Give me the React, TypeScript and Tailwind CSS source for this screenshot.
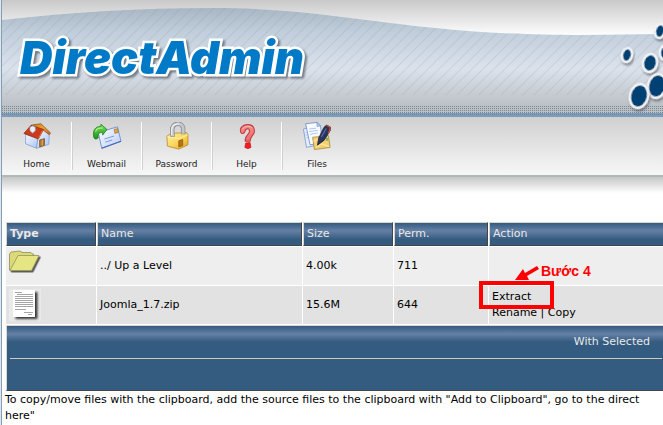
import React from 'react';

const HomeIcon = () => (
  <svg className="h-8 w-8" viewBox="0 0 32 32">
    <defs>
      <linearGradient id="wall" x1="0" y1="0" x2="1" y2="1">
        <stop offset="0" stopColor="#f4f8ff" />
        <stop offset="1" stopColor="#a9c4f6" />
      </linearGradient>
      <linearGradient id="roof" x1="0" y1="0" x2="1" y2="1">
        <stop offset="0" stopColor="#c8741c" />
        <stop offset="0.5" stopColor="#f0a436" />
        <stop offset="1" stopColor="#c4621a" />
      </linearGradient>
    </defs>
    <path d="M3 14 L17 18 L15.5 30 L3 25Z" fill="url(#wall)" stroke="#7b97cc" strokeWidth="0.8" />
    <path d="M17 19 L23 9 L30 14.5 L29.5 25.5 L15.5 30Z" fill="url(#wall)" stroke="#7b97cc" strokeWidth="0.8" />
    <path d="M19 20.5 L24.5 19 V26.5 L19 28.5Z" fill="#b9772c" stroke="#6e4214" strokeWidth="0.8" />
    <path d="M22 20.5 V27" stroke="#e8b868" strokeWidth="1" />
    <path d="M9.5 3.5 L20.5 2 L31.5 12.5 L30 14.5 L23 9 L9 5Z" fill="url(#roof)" stroke="#8c4a14" strokeWidth="0.8" />
    <path d="M9 4 L1 13 L17.5 19.5 L23.5 8.5 L13 5Z" fill="#cb3b18" stroke="#8a2a0c" strokeWidth="0.8" />
    <path d="M22.5 9.5 L17.5 19" stroke="#ee7a44" strokeWidth="1" />
    <path d="M8 6 L11 4.5 L14 6 V10 L11 12.5 L8 10Z" fill="#e8f0fd" stroke="#9aadd2" strokeWidth="0.8" />
  </svg>
);

const WebmailIcon = () => (
  <svg className="h-8 w-8" viewBox="0 0 32 32">
    <defs>
      <linearGradient id="envelope" x1="0" y1="0" x2="1" y2="1">
        <stop offset="0" stopColor="#ffffff" />
        <stop offset="1" stopColor="#b9cdf8" />
      </linearGradient>
      <linearGradient id="arrow" x1="0" y1="0" x2="0" y2="1">
        <stop offset="0" stopColor="#7de055" />
        <stop offset="1" stopColor="#169419" />
      </linearGradient>
    </defs>
    <path d="M6 12 L28 5.5 L32 22 L10 30Z" fill="url(#envelope)" stroke="#6b8ad0" strokeWidth="1" />
    <path d="M10 30 L32 22" stroke="#4767b4" strokeWidth="1.2" />
    <path d="M13 19.5 L24 16 M14 23 L22 20.5" stroke="#6f8fd6" strokeWidth="1" />
    <path d="M24 8.5 L28 7.5 L29 12 L25 13Z" fill="#e0a63c" stroke="#865f34" strokeWidth="0.6" />
    <path d="M1 18 C-1 9 3 5 9 5 V2.5 L16 8.5 L11 15 V12 C7 12 5.5 13 6 18 C4 20 2 20 1 18Z" fill="url(#arrow)" stroke="#14781a" strokeWidth="0.8" />
    <path d="M3 11 C4 7.5 7 6.5 11 7" stroke="#b8f79c" strokeWidth="1.2" fill="none" />
  </svg>
);

const PasswordIcon = () => (
  <svg className="h-8 w-8" viewBox="0 0 32 32">
    <defs>
      <linearGradient id="lock" x1="0" y1="0" x2="1" y2="1">
        <stop offset="0" stopColor="#fff3a6" />
        <stop offset="0.5" stopColor="#fbd860" />
        <stop offset="1" stopColor="#e3a724" />
      </linearGradient>
    </defs>
    <path d="M4.5 16 L10 13 L27 12 L28.5 14.5 V26 L18 31 L5 27.5Z" fill="url(#lock)" stroke="#b8852a" strokeWidth="0.9" />
    <path d="M5 16.5 L17 19 L28 15" fill="none" stroke="#fff2ab" strokeWidth="1" />
    <path d="M11 17 L10.5 9 C10.5 0.5 21.5 0 23 6.5 V14" fill="none" stroke="#85888d" strokeWidth="5" />
    <path d="M11 16.5 L10.5 9 C10.5 0.5 21.5 0 23 6.5 V13.5" fill="none" stroke="#c4c7cc" strokeWidth="3.4" />
    <path d="M10 15 V9 C10 3.5 15 1.5 18.5 2.5" fill="none" stroke="#f7f8f9" strokeWidth="1.2" />
    <path d="M18 21.5 L22.5 20 V27 L18 28.5Z" fill="#b8741a" stroke="#8a5410" strokeWidth="0.8" />
  </svg>
);

const HelpIcon = () => (
  <svg className="h-8 w-8" viewBox="0 0 32 32">
    <defs>
      <linearGradient id="mark" x1="0" y1="0" x2="0" y2="1">
        <stop offset="0" stopColor="#f58c8a" />
        <stop offset="1" stopColor="#f26a6a" />
      </linearGradient>
    </defs>
    <path d="M9 12 C7 7 11 3 17 3 C25 3 26 11 22.5 15 C20 18 19.5 19 19.5 22 H14 C13 17 17 15 18.5 12 C20 7 15 6 13.5 11 C13 13.5 10 14 9 12Z" fill="url(#mark)" stroke="#bd3b3e" strokeWidth="1.2" />
    <path d="M11 8 C13 4 20 4 22 7" fill="none" stroke="#fcc3c1" strokeWidth="1" />
    <path d="M14.5 24 L19.5 23.5 L20.5 29 L17 30.5 L13.5 29Z" fill="#f01c22" stroke="#c2151b" strokeWidth="0.8" />
  </svg>
);

const FilesIcon = () => (
  <svg className="h-8 w-8" viewBox="0 0 32 32">
    <path d="M0.5 8 L9 6 L13 27 L4 29Z" fill="#e6eefc" stroke="#7894cf" strokeWidth="0.9" />
    <path d="M3 2 L16 0.5 L20 4.5 L22 24 L8 26Z" fill="#f7faff" stroke="#6787c7" strokeWidth="0.9" />
    <path d="M16 0.5 V5 L20 4.5Z" fill="#bad0f6" stroke="#6787c7" strokeWidth="0.7" />
    <path d="M7 8 L15 7 M7 11 L17 9.5 M8 14 L17 12.5 M3 12 L5 11.5 M3 15 L6 14.5 M4 18 L6 17.5" stroke="#9db8e8" strokeWidth="0.9" />
    <path d="M11 17.5 L29 15.5 L31 29 L13 31.5Z" fill="#f6cf70" stroke="#a98636" strokeWidth="0.9" />
    <path d="M12 22 L17 20 M15 29 L21 25 L30 28" fill="none" stroke="#fff0b6" strokeWidth="1" />
    <path d="M26 18 H29 V21.5 H26Z" fill="#7db56a" />
    <path d="M16.5 26.5 L18 18 L24 6 L27 3.5 L31.5 6 L31 10 L24 21Z" fill="#29355c" stroke="#121a35" strokeWidth="0.8" />
    <path d="M27 4 L31 6 L30 11 L28.5 13" fill="none" stroke="#e2482a" strokeWidth="1.3" />
    <path d="M21 17 L26.5 7.5" stroke="#5e74ad" strokeWidth="1.2" />
  </svg>
);

const FolderIcon = () => (
  <svg className="h-8 w-8" viewBox="0 0 32 32">
    <defs>
      <filter id="folderShadow" x="-20%" y="-20%" width="140%" height="140%">
        <feDropShadow dx="1.5" dy="1.5" stdDeviation="0.7" floodColor="#333" floodOpacity="0.8" />
      </filter>
    </defs>
    <g filter="url(#folderShadow)" strokeLinejoin="round">
      <path d="M0.5 20 V4 L2 2 L11 1 L13 2.5 H22 L24.5 5 V8 L21 20Z" fill="#dbda76" stroke="#8f9157" strokeWidth="0.8" />
      <path d="M1 20.5 L9 5.5 H30 L22.5 20.5Z" fill="#e6e584" stroke="#92945a" strokeWidth="0.8" />
    </g>
  </svg>
);

const FileIcon = () => (
  <svg className="h-8 w-8" viewBox="0 0 32 32">
    <defs>
      <filter id="fileShadow" x="-20%" y="-20%" width="140%" height="140%">
        <feDropShadow dx="2.5" dy="2" stdDeviation="0.8" floodColor="#222" floodOpacity="0.9" />
      </filter>
    </defs>
    <rect width="32" height="32" fill="#eaeaea" />
    <path d="M4 1 H26 V28 H4Z" fill="#fff" filter="url(#fileShadow)" />
    <path d="M6 3.5 H13 M8 5.5 H24 M6 7.5 H24 M6 9.5 H24 M6 11.5 H24 M6 13.5 H24 M6 15.5 H24 M6 17.5 H24 M6 20.5 H17 M15 23.5 H24 M19 25.5 H23" stroke="#a6a6a6" strokeWidth="1" />
  </svg>
);

const NAV_ITEMS = [
  { label: 'Home', icon: HomeIcon },
  { label: 'Webmail', icon: WebmailIcon },
  { label: 'Password', icon: PasswordIcon },
  { label: 'Help', icon: HelpIcon },
  { label: 'Files', icon: FilesIcon },
];

// Decorative bubbles on the right side of the banner
const BUBBLES = [
  { x: 52, y: 31, rx: 4, ry: 6 },
  { x: 19, y: 55, rx: 4, ry: 6 },
  { x: 58, y: 52, rx: 5, ry: 7 },
  { x: 42, y: 63, rx: 6, ry: 8 },
  { x: 49, y: 86, rx: 8, ry: 11 },
  { x: 31, y: 96, rx: 8, ry: 11 },
];

const FILES = [
  { name: '../ Up a Level', size: '4.00k', perm: '711', folder: true },
  { name: 'Joomla_1.7.zip', size: '15.6M', perm: '644', folder: false },
];

const COLUMNS = ['Type', 'Name', 'Size', 'Perm.', 'Action'];

const Banner = () => (
  <header className="relative h-[117px] overflow-hidden">
    <svg className="absolute inset-0 h-full w-full" viewBox="0 0 661 117" preserveAspectRatio="none">
      <defs>
        <linearGradient id="sky" x1="0" y1="0" x2="0" y2="36" gradientUnits="userSpaceOnUse">
          <stop offset="0" stopColor="#c9c9c9" />
          <stop offset="1" stopColor="#ffffff" />
        </linearGradient>
        <linearGradient id="wave" x1="0" y1="8" x2="0" y2="106" gradientUnits="userSpaceOnUse">
          <stop offset="0" stopColor="#a9b6c4" />
          <stop offset="0.25" stopColor="#c1cedb" />
          <stop offset="0.62" stopColor="#dbe2ec" />
          <stop offset="0.88" stopColor="#c6cbd1" />
          <stop offset="1" stopColor="#bcc1c6" />
        </linearGradient>
        <pattern id="stripes" width="11" height="11" patternUnits="userSpaceOnUse">
          <path d="M-1 12 L12 -1 M-1 1 L1 -1 M10 12 L12 10" stroke="#8294a4" strokeOpacity="0.18" strokeWidth="1.2" />
        </pattern>
        <pattern id="dots" width="2" height="2" patternUnits="userSpaceOnUse">
          <rect width="1" height="1" fill="#7d8790" />
        </pattern>
        <clipPath id="stripeArea">
          <rect width="661" height="95" />
        </clipPath>
      </defs>
      <rect width="661" height="117" fill="url(#sky)" />
      <path d="M0 20 C70 12 140 8 210 8 C340 8 400 35 580 35 L661 34 V117 H0Z" fill="url(#wave)" />
      <path d="M0 20 C70 12 140 8 210 8 C340 8 400 35 580 35 L661 34 V117 H0Z" fill="url(#stripes)" clipPath="url(#stripeArea)" />
      <rect y="113" width="661" height="4" fill="#7b9cbc" />
      <rect y="106" width="661" height="9" fill="url(#dots)" />
    </svg>
    <svg className="absolute right-0 top-0 h-[117px] w-[55px]" viewBox="0 0 55 117">
      <defs>
        <filter id="bubbleShadow" x="-20%" y="-20%" width="150%" height="150%">
          <feDropShadow dx="1.5" dy="2" stdDeviation="1" floodColor="#445" floodOpacity="0.6" />
        </filter>
      </defs>
      {BUBBLES.map(b => (
        <ellipse
          key={`${b.x}-${b.y}`}
          cx={b.x}
          cy={b.y}
          rx={b.rx + 1}
          ry={b.ry + 1}
          transform={`rotate(14 ${b.x} ${b.y})`}
          fill="#004173"
          stroke="#f1f3f4"
          strokeWidth="2.5"
          filter="url(#bubbleShadow)"
        />
      ))}
    </svg>
    <h1 className="relative px-[18px] pt-[30px] font-[Inter,sans-serif] text-[45px] leading-[56px] font-black whitespace-nowrap text-[#007ac6] italic drop-shadow-[2px_2px_1px_rgba(70,80,90,0.7)] [-webkit-text-stroke:5px_white] [paint-order:stroke_fill]">
      DirectAdmin
    </h1>
  </header>
);

const Toolbar = () => (
  <nav className="flex h-[60px] items-center border-b-2 border-[#b2b7b7] bg-linear-to-b from-[#d0d0d0] to-[#f7f7f7]">
    {NAV_ITEMS.map(({ label, icon: Icon }) => (
      <a
        key={label}
        href="#"
        className="flex h-12 w-[70px] flex-col items-center border-r border-white text-[9px] leading-3 text-[#222] shadow-[1px_0_0_#d0d0d0] last:border-0 last:shadow-none"
      >
        <Icon />
        <span className="pt-2">{label}</span>
      </a>
    ))}
  </nav>
);

// Red call-out around the Extract link
const ExtractCallout = () => (
  <div className="pointer-events-none absolute -top-7 -left-[13px] w-36">
    <div className="flex h-5 items-end pl-9">
      <svg className="h-4 w-6" viewBox="0 0 24 16">
        <path d="M0 15 L8 4 L10 8 L22 1 L24 4 L12 11 L14 15Z" fill="#f00" />
      </svg>
      <span className="pl-0.5 font-['Liberation_Sans',sans-serif] text-[14px] leading-5 font-bold whitespace-nowrap text-[#f00]">Bước 4</span>
    </div>
    <div className="h-7 w-[75px] border-4 border-[#f00]" />
  </div>
);

const FileTable = () => (
  <table className="w-full table-fixed border-separate border-spacing-px">
    <colgroup>
      <col className="w-[90px]" />
      <col className="w-[205px]" />
      <col className="w-[90px]" />
      <col className="w-[94px]" />
      <col />
    </colgroup>
    <thead>
      <tr>
        {COLUMNS.map(col => (
          <th
            key={col}
            className="h-6 border border-t-[#d6d6d0] border-r-[#444] border-b-[#444] border-l-[#d6d6d0] bg-linear-to-b from-[#345b80] from-0% via-[#6580a5] via-35% to-[#345b80] to-75% px-[3px] text-left font-normal text-[#e8e8e8] first:font-bold"
          >
            {col}
          </th>
        ))}
      </tr>
    </thead>
    <tbody>
      {FILES.map(file => (
        <tr key={file.name} className="bg-[#eee] even:bg-[#e2e2e2]">
          <td className="h-[38px] px-[3px] align-middle">{file.folder ? <FolderIcon /> : <FileIcon />}</td>
          <td className="px-[3px]">{file.name}</td>
          <td className="px-[3px]">{file.size}</td>
          <td className="px-[3px]">{file.perm}</td>
          <td className="px-[3px]">
            {!file.folder && (
              <div className="relative">
                <a href="#" className="block w-fit">Extract</a>
                <a href="#">Rename</a> | <a href="#">Copy</a>
                <ExtractCallout />
              </div>
            )}
          </td>
        </tr>
      ))}
    </tbody>
    <tfoot>
      <tr>
        <td
          colSpan={5}
          className="h-[66px] border border-t-[#d6d6d0] border-r-[#444] border-b-[#444] border-l-[#d6d6d0] bg-[#345b80] bg-[linear-gradient(#345b80,#6580a5_8px,#345b80_16px)] px-[3px] text-right align-top text-[#e8e8e8]"
        >
          <div className="border-b border-[#d4c8b8] pt-2 pr-3 pb-2">With Selected</div>
        </td>
      </tr>
    </tfoot>
  </table>
);

const App: React.FC = () => {
  return (
    <div className="min-h-screen overflow-hidden border-l border-[#e4e4e4] bg-white font-['DejaVu_Sans',Verdana,sans-serif] text-[11px] leading-4 text-black">
      <div className="min-h-screen border-l border-[#7f9fbe]">
        <Banner />
        <Toolbar />
        <div className="h-4 bg-linear-to-b from-[#c6c6c6] to-white" />
        <main className="pt-7 pl-[3px]">
          <div className="-mr-1">
            <FileTable />
          </div>
          <p className="whitespace-nowrap">
            To copy/move files with the clipboard, add the source files to the clipboard with "Add to Clipboard", go to the direct
            <br />
            here"
          </p>
        </main>
      </div>
    </div>
  );
};

export default App;
